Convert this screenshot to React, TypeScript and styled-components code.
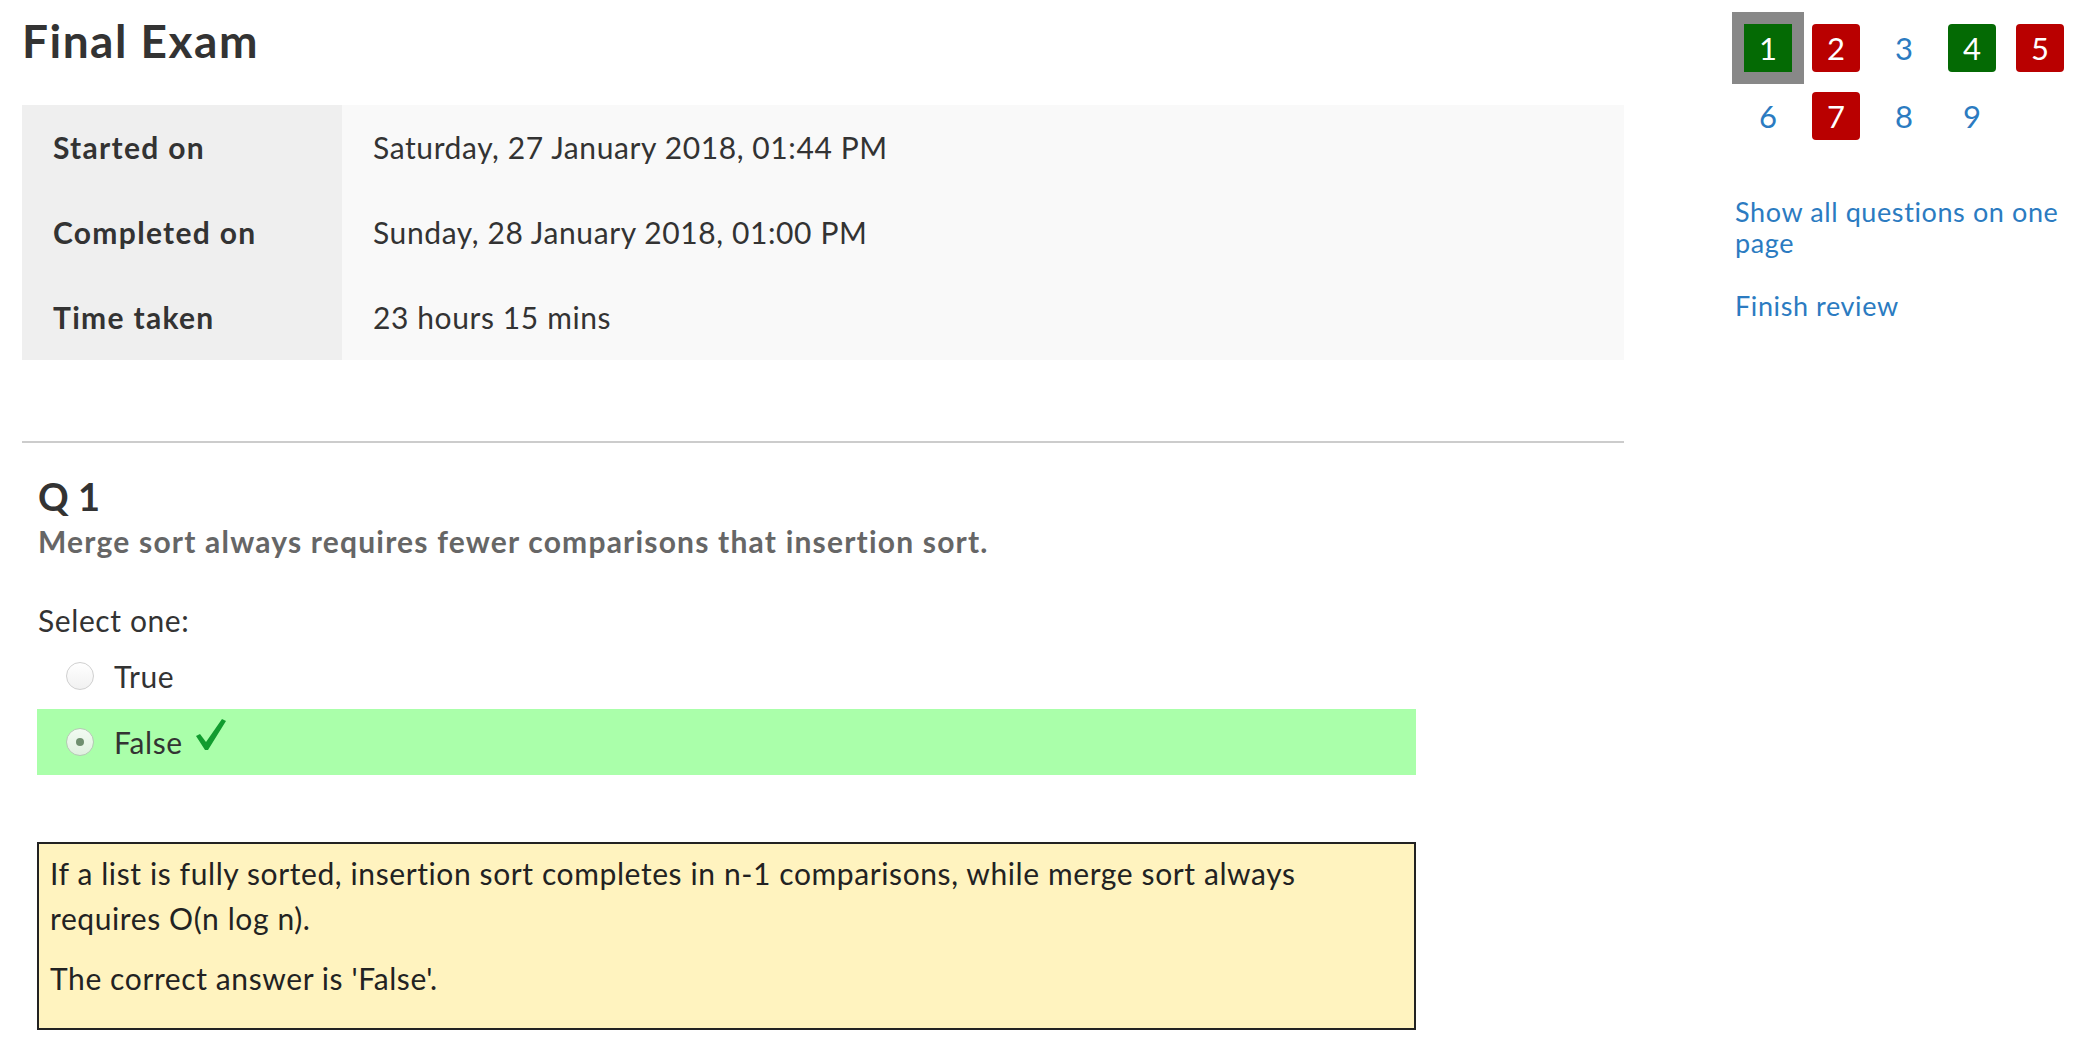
import styled, { createGlobalStyle } from "styled-components";

const GlobalStyle = createGlobalStyle`
  html, body {
    margin: 0;
    padding: 0;
    background: #ffffff;
  }
  body {
    font-family: Lato, "Open Sans", "Liberation Sans", sans-serif;
    font-size: 30px;
    line-height: 1.5;
    letter-spacing: 0.6px;
    color: #333333;
  }
`;

const Page = styled.div`
  display: flex;
  align-items: flex-start;
  padding-left: 22px;
`;

const Main = styled.main`
  width: 1602px;
  flex-shrink: 0;
`;

const Title = styled.h2`
  margin: 13px 0 0;
  font-size: 46px;
  line-height: 55px;
  font-weight: 700;
  letter-spacing: 1.5px;
  color: #333333;
`;

const SummaryTable = styled.div`
  display: grid;
  grid-template-columns: 320px 1fr;
  grid-auto-rows: 85px;
  margin-top: 37px;
`;

const Label = styled.div`
  display: flex;
  align-items: center;
  padding-left: 31px;
  background: #efefef;
  font-weight: 700;
  letter-spacing: 1.3px;
`;

const Value = styled.div`
  display: flex;
  align-items: center;
  padding-left: 31px;
  background: #f9f9f9;
`;

const Divider = styled.hr`
  margin: 81px 0 0;
  border: 0;
  height: 2px;
  background: #cccccc;
`;

const Question = styled.section`
  padding: 0 0 0 16px;
  width: 1378px;
`;

const QNumber = styled.h3`
  margin: 30px 0 0;
  font-size: 38px;
  line-height: 46px;
  font-weight: 700;
  letter-spacing: 0;
  color: #333333;
`;

const QText = styled.p`
  margin: 0;
  font-weight: 700;
  letter-spacing: 1.2px;
  color: #666666;
`;

const Prompt = styled.p`
  margin: 34px 0 0;
`;

const Answer = styled.div<{ $correct?: boolean }>`
  display: flex;
  align-items: center;
  height: 66px;
  margin-left: -1px;
  padding-left: 29px;
  background: ${({ $correct }) => ($correct ? "#aaffaa" : "transparent")};
`;

const Radio = styled.span<{ $checked?: boolean }>`
  position: relative;
  width: 26px;
  height: 26px;
  border-radius: 50%;
  border: 1px solid ${({ $checked }) => ($checked ? "#b5c9b5" : "#d0d0d0")};
  background: ${({ $checked }) =>
    $checked
      ? "linear-gradient(#f2fbf2, #dff0df)"
      : "linear-gradient(#ffffff, #f1f1f1)"};
  flex-shrink: 0;

  &::after {
    content: "";
    display: ${({ $checked }) => ($checked ? "block" : "none")};
    position: absolute;
    left: 50%;
    top: 50%;
    width: 8px;
    height: 8px;
    margin: -4px 0 0 -4px;
    border-radius: 50%;
    background: #6f8f6f;
  }
`;

const AnswerText = styled.span`
  margin-left: 20px;
  line-height: 45px;
`;

const Tick = styled.svg`
  margin-left: 13px;
  align-self: flex-start;
  margin-top: 10px;
`;

const Feedback = styled.div`
  margin: 67px 0 0 -1px;
  border: 2px solid #222222;
  background: #fff3bf;
  padding: 7px 11px 12px;
  color: #222222;

  p {
    margin: 0 0 15px;
  }
`;

const Aside = styled.aside`
  margin-left: 108px;
  width: 343px;
  flex-shrink: 0;
`;

const NavGrid = styled.div`
  display: grid;
  grid-template-columns: repeat(5, 48px);
  grid-auto-rows: 48px;
  gap: 20px;
  margin: 24px 0 0 12px;
`;

const NavButton = styled.a<{ $state?: "correct" | "wrong"; $current?: boolean }>`
  display: flex;
  align-items: center;
  justify-content: center;
  font-size: 31px;
  line-height: 1;
  letter-spacing: 0;
  text-decoration: none;
  border-radius: ${({ $current }) => ($current ? "0" : "4px")};
  color: ${({ $state }) => ($state ? "#ffffff" : "#2b7bc1")};
  background: ${({ $state }) =>
    $state === "correct" ? "#046a04" : $state === "wrong" ? "#b90000" : "transparent"};
  box-shadow: ${({ $current }) => ($current ? "0 0 0 12px #888888" : "none")};
`;

const NavLinks = styled.div`
  margin: 56px 0 0 3px;
  display: flex;
  flex-direction: column;
  gap: 32px;
`;

const NavLink = styled.a`
  font-size: 27px;
  line-height: 31px;
  color: #2b7bc1;
  text-decoration: none;
`;

const navItems: { n: number; state?: "correct" | "wrong"; current?: boolean }[] = [
  { n: 1, state: "correct", current: true },
  { n: 2, state: "wrong" },
  { n: 3 },
  { n: 4, state: "correct" },
  { n: 5, state: "wrong" },
  { n: 6 },
  { n: 7, state: "wrong" },
  { n: 8 },
  { n: 9 },
];

export default function App() {
  return (
    <>
      <GlobalStyle />
      <Page>
        <Main>
          <Title>Final Exam</Title>
          <SummaryTable>
            <Label>Started on</Label>
            <Value>Saturday, 27 January 2018, 01:44 PM</Value>
            <Label>Completed on</Label>
            <Value>Sunday, 28 January 2018, 01:00 PM</Value>
            <Label>Time taken</Label>
            <Value>23 hours 15 mins</Value>
          </SummaryTable>
          <Divider />
          <Question>
            <QNumber>Q 1</QNumber>
            <QText>Merge sort always requires fewer comparisons that insertion sort.</QText>
            <Prompt>Select one:</Prompt>
            <Answer>
              <Radio />
              <AnswerText>True</AnswerText>
            </Answer>
            <Answer $correct>
              <Radio $checked />
              <AnswerText>False</AnswerText>
              <Tick width="30" height="31" viewBox="0 0 30 31">
                <path d="M0 17 L4 15 L10 23 L26 0 L30 2 L12 31 L9 31 Z" fill="#119c2f" />
              </Tick>
            </Answer>
            <Feedback>
              <p>
                If a list is fully sorted, insertion sort completes in n-1 comparisons, while
                merge sort always requires O(n log n).
              </p>
              <p>The correct answer is 'False'.</p>
            </Feedback>
          </Question>
        </Main>
        <Aside>
          <NavGrid>
            {navItems.map((item) => (
              <NavButton key={item.n} href="#" $state={item.state} $current={item.current}>
                {item.n}
              </NavButton>
            ))}
          </NavGrid>
          <NavLinks>
            <NavLink href="#">Show all questions on one page</NavLink>
            <NavLink href="#">Finish review</NavLink>
          </NavLinks>
        </Aside>
      </Page>
    </>
  );
}
